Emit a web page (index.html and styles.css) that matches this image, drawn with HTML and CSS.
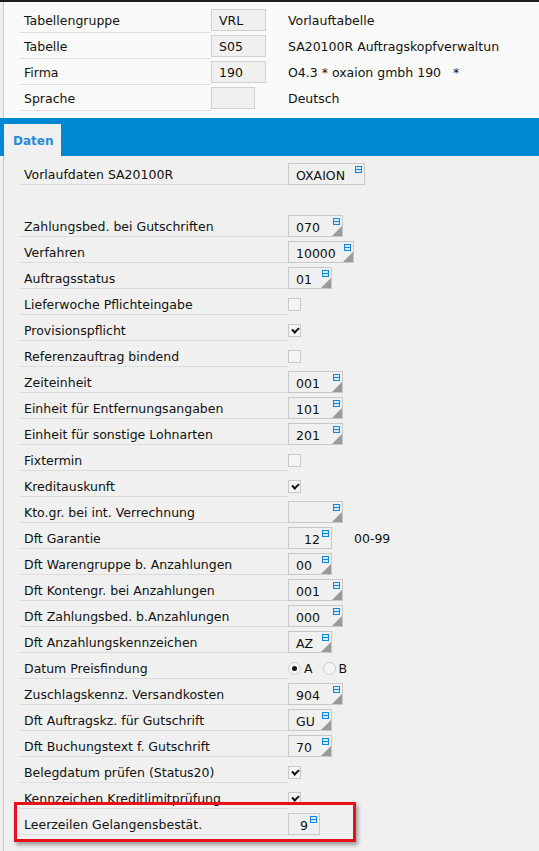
FILE: index.html
```html
<!DOCTYPE html>
<html lang="de">
<head>
<meta charset="utf-8">
<title>Vorlauftabelle</title>
<link rel="stylesheet" href="styles.css">
</head>
<body>
<div class="app">
  <header class="head">
    <div class="hrow"><span class="hlabel">Tabellengruppe</span><span class="hctrl"><span class="hbox w55">VRL</span></span><span class="htext">Vorlauftabelle</span></div>
    <div class="hrow"><span class="hlabel">Tabelle</span><span class="hctrl"><span class="hbox w55">S05</span></span><span class="htext">SA20100R Auftragskopfverwaltun</span></div>
    <div class="hrow"><span class="hlabel">Firma</span><span class="hctrl"><span class="hbox w55">190</span></span><span class="htext">O4.3 * oxaion gmbh 190 &nbsp;&nbsp;*</span></div>
    <div class="hrow"><span class="hlabel">Sprache</span><span class="hctrl"><span class="hbox w44"></span></span><span class="htext">Deutsch</span></div>
  </header>

  <nav class="tabbar"><div class="tab">Daten</div></nav>

  <main class="content">
    <div class="row"><span class="label">Vorlaufdaten SA20100R</span><span class="field w77">OXAION<i class="lst"></i></span></div>
    <div class="row blank"></div>
    <div class="row"><span class="label">Zahlungsbed. bei Gutschriften</span><span class="field w55 drop">070<i class="lst"></i></span></div>
    <div class="row"><span class="label">Verfahren</span><span class="field w66 drop">10000<i class="lst"></i></span></div>
    <div class="row"><span class="label">Auftragsstatus</span><span class="field w44 drop">01<i class="lst"></i></span></div>
    <div class="row"><span class="label">Lieferwoche Pflichteingabe</span><span class="check"></span></div>
    <div class="row"><span class="label">Provisionspflicht</span><span class="check on"></span></div>
    <div class="row"><span class="label">Referenzauftrag bindend</span><span class="check"></span></div>
    <div class="row"><span class="label">Zeiteinheit</span><span class="field w55 drop">001<i class="lst"></i></span></div>
    <div class="row"><span class="label">Einheit für Entfernungsangaben</span><span class="field w55 drop">101<i class="lst"></i></span></div>
    <div class="row"><span class="label">Einheit für sonstige Lohnarten</span><span class="field w55 drop">201<i class="lst"></i></span></div>
    <div class="row"><span class="label">Fixtermin</span><span class="check"></span></div>
    <div class="row"><span class="label">Kreditauskunft</span><span class="check on"></span></div>
    <div class="row"><span class="label">Kto.gr. bei int. Verrechnung</span><span class="field w55 drop"><i class="lst"></i></span></div>
    <div class="row"><span class="label">Dft Garantie</span><span class="field w44 num">12<i class="lst"></i></span><span class="hint">00-99</span></div>
    <div class="row"><span class="label">Dft Warengruppe b. Anzahlungen</span><span class="field w44 drop">00<i class="lst"></i></span></div>
    <div class="row"><span class="label">Dft Kontengr. bei Anzahlungen</span><span class="field w55 drop">001<i class="lst"></i></span></div>
    <div class="row"><span class="label">Dft Zahlungsbed. b.Anzahlungen</span><span class="field w55 drop">000<i class="lst"></i></span></div>
    <div class="row"><span class="label">Dft Anzahlungskennzeichen</span><span class="field w44 drop">AZ<i class="lst"></i></span></div>
    <div class="row"><span class="label">Datum Preisfindung</span><span class="radios"><span class="radio on"></span><span class="rtext">A</span><span class="radio"></span><span class="rtext">B</span></span></div>
    <div class="row"><span class="label">Zuschlagskennz. Versandkosten</span><span class="field w55 drop">904<i class="lst"></i></span></div>
    <div class="row"><span class="label">Dft Auftragskz. für Gutschrift</span><span class="field w44 drop">GU<i class="lst"></i></span></div>
    <div class="row"><span class="label">Dft Buchungstext f. Gutschrift</span><span class="field w44 drop">70<i class="lst"></i></span></div>
    <div class="row"><span class="label">Belegdatum prüfen (Status20)</span><span class="check on"></span></div>
    <div class="row"><span class="label">Kennzeichen Kreditlimitprüfung</span><span class="check on"></span></div>
    <div class="row marked"><span class="label">Leerzeilen Gelangensbestät.</span><span class="field w32 num">9<i class="lst"></i></span><span class="mark"></span></div>
  </main>
</div>
</body>
</html>
```

FILE: styles.css
```css
* { box-sizing: border-box; }

html, body {
  margin: 0;
  padding: 0;
}

body {
  width: 539px;
  height: 851px;
  overflow: hidden;
  background: #f0f0f0;
  font-family: "DejaVu Sans", Verdana, sans-serif;
  font-size: 12.5px;
  color: #111;
  border-top: 2px solid #1e1e1e;
}

.app {
  display: flex;
  flex-direction: column;
  height: 849px;
}

/* ---------- header ---------- */
.head {
  background: #fafafa;
  border-left: 1px solid #c8c8c8;
  margin-left: 3px;
  padding: 5px 0 7px 15px;
}

.hrow {
  display: flex;
  align-items: flex-start;
  height: 26px;
}

.hlabel {
  width: 192px;
  height: 26px;
  border-bottom: 1px solid #e0e0e0;
  padding: 6px 0 0 5px;
  line-height: 16px;
}

.hctrl {
  width: 77px;
  padding-top: 2px;
}

.hbox {
  display: block;
  height: 22px;
  background: #f0f0f0;
  border: 1px solid #cfcfcf;
  padding: 3px 0 0 7px;
  line-height: 16px;
}

.htext {
  padding-top: 6px;
  line-height: 16px;
  white-space: pre;
}

/* ---------- tabs ---------- */
.tabbar {
  height: 38px;
  background: #0088d4;
  padding: 6px 0 0 4px;
  display: flex;
}

.tab {
  width: 57px;
  background: #f0f0f0;
  color: #2a8ad8;
  font-weight: bold;
  font-size: 12px;
  padding: 9px 0 0 9px;
  line-height: 16px;
}

/* ---------- content ---------- */
.content {
  flex: 1;
  border-left: 1px solid #c8c8c8;
  margin-left: 3px;
  padding: 5px 0 0 15px;
}

.row {
  display: flex;
  align-items: flex-start;
  height: 26px;
  position: relative;
}

.label {
  width: 269px;
  height: 24px;
  border-bottom: 1px solid #dcdcdc;
  padding: 6px 0 0 5px;
  line-height: 16px;
  white-space: nowrap;
}

.blank .label, .blank { border: 0; }

.field {
  position: relative;
  display: block;
  margin-top: 2px;
  height: 22px;
  background: #f0f0f0;
  border: 1px solid #c8c8c8;
  padding: 4px 0 0 7px;
  line-height: 16px;
}

.field.num {
  text-align: right;
  padding: 4px 11px 0 0;
}

.w32 { width: 32px; }
.w44 { width: 44px; }
.w55 { width: 55px; }
.w66 { width: 66px; }
.w77 { width: 77px; }

.lst {
  position: absolute;
  top: 2px;
  right: 2px;
  width: 7px;
  height: 7px;
  border: 1px solid #0d88de;
  background:
    linear-gradient(#0d88de, #0d88de) 0 2px / 100% 1px no-repeat,
    #d4e9f9;
}

.drop::after {
  content: "";
  position: absolute;
  right: 0;
  bottom: 0;
  width: 0;
  height: 0;
  border-style: solid;
  border-width: 0 0 10px 10px;
  border-color: transparent transparent #9a9a9a transparent;
}

.check {
  display: block;
  margin-top: 7px;
  width: 13px;
  height: 13px;
  border: 1px solid #c8c8c8;
  background: #f4f4f4;
  position: relative;
}

.check.on::after {
  content: "";
  position: absolute;
  left: 3px;
  top: 2px;
  width: 5px;
  height: 3px;
  border-left: 2px solid #111;
  border-bottom: 2px solid #111;
  transform: rotate(-45deg);
}

.hint {
  padding: 6px 0 0 22px;
  line-height: 16px;
}

.radios {
  display: flex;
  align-items: center;
  height: 26px;
  padding-top: 1px;
}

.radio {
  width: 13px;
  height: 13px;
  border: 1px solid #cdcdcd;
  border-radius: 50%;
  background: #f4f4f4;
  position: relative;
}

.radio.on::after {
  content: "";
  position: absolute;
  left: 3px;
  top: 3px;
  width: 5px;
  height: 5px;
  border-radius: 50%;
  background: #111;
}

.rtext {
  padding: 0 10px 0 3px;
  line-height: 16px;
}

.mark {
  position: absolute;
  left: -5px;
  top: -9px;
  width: 342px;
  height: 40px;
  border: 3px solid #e5121a;
  box-shadow: 2px 3px 4px rgba(0, 0, 0, 0.35);
  pointer-events: none;
}
```
